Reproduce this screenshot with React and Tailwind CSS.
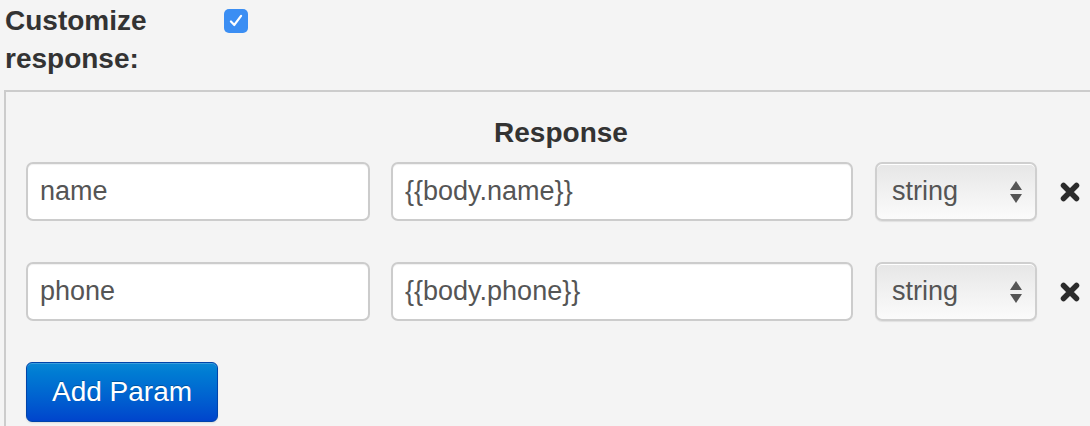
import { useState } from "react";

const font = { fontFamily: '"Liberation Sans", Arial, sans-serif' };

const RemoveIcon = () => (
  <svg width="22" height="22" viewBox="0 0 22 22" className="shrink-0">
    <path
      d="M4.5 4.5 L17.5 17.5 M17.5 4.5 L4.5 17.5"
      stroke="#2b2b2b"
      strokeWidth="5.5"
      strokeLinecap="round"
      fill="none"
    />
  </svg>
);

const SelectArrows = () => (
  <svg width="14" height="26" viewBox="0 0 14 26">
    <path d="M7 2 L13 11 L1 11 Z" fill="#555" />
    <path d="M1 15 L13 15 L7 24 Z" fill="#555" />
  </svg>
);

const ParamRow = ({ param, onRemove }) => (
  <div className="flex items-center h-[59px]">
    <input
      type="text"
      defaultValue={param.name}
      className="w-[344px] h-full bg-white border-2 border-[#cccccc] rounded-[7px] px-3 text-[27px] text-[#555555] outline-none shadow-[inset_0_1px_1px_rgba(0,0,0,0.06)]"
      style={font}
    />
    <input
      type="text"
      defaultValue={param.value}
      className="ml-[21px] w-[462px] h-full bg-white border-2 border-[#cccccc] rounded-[7px] px-3 text-[27px] text-[#555555] outline-none shadow-[inset_0_1px_1px_rgba(0,0,0,0.06)]"
      style={font}
    />
    <div className="ml-[22px] w-[162px] h-full flex items-center justify-between border-2 border-[#cfcfcf] rounded-[7px] pl-[15px] pr-[12px] bg-gradient-to-b from-[#e6e6e6] via-[#f1f1f1] to-[#fbfbfb] shadow-[inset_0_1px_0_#ffffff,0_1px_1px_rgba(0,0,0,0.08)]">
      <span className="text-[27px] text-[#555555]">{param.type}</span>
      <SelectArrows />
    </div>
    <button onClick={onRemove} className="ml-[22px] cursor-pointer">
      <RemoveIcon />
    </button>
  </div>
);

const App = () => {
  const [custom, setCustom] = useState(true);
  const [params, setParams] = useState([
    { id: 1, name: "name", value: "{{body.name}}", type: "string" },
    { id: 2, name: "phone", value: "{{body.phone}}", type: "string" },
  ]);

  return (
    <div className="w-[1090px] h-[426px] overflow-hidden bg-[#f4f4f4] text-[#333333]" style={font}>
      {/* Customize toggle */}
      <div className="flex items-start pt-[2px] pl-[5px]">
        <div className="w-[219px] text-[28px] font-bold leading-[38px]">
          Customize
          <br />
          response:
        </div>
        <label className="mt-[7px] cursor-pointer">
          <input
            type="checkbox"
            checked={custom}
            onChange={() => setCustom(!custom)}
            className="sr-only"
          />
          <span
            className={`flex items-center justify-center w-[24px] h-[24px] rounded-[5px] ${
              custom ? "bg-[#3b8ef3]" : "bg-white border border-[#aaaaaa]"
            }`}
          >
            {custom && (
              <svg width="18" height="18" viewBox="0 0 16 16">
                <path d="M3.5 8.5 L6.5 11.5 L12.5 3.5" stroke="#ffffff" strokeWidth="2" fill="none" strokeLinecap="round" strokeLinejoin="round" />
              </svg>
            )}
          </span>
        </label>
      </div>

      {/* Response panel */}
      <div className="mt-[12px] ml-[4px] w-[1114px] border-2 border-[#cccccc] pt-[25px] px-[20px] pb-8">
        <div className="text-center text-[28px] font-bold leading-[32px]">Response</div>

        <div className="mt-[13px] flex flex-col gap-[41px]">
          {params.map((p) => (
            <ParamRow
              key={p.id}
              param={p}
              onRemove={() => setParams(params.filter((x) => x.id !== p.id))}
            />
          ))}
        </div>

        <button
          onClick={() =>
            setParams([...params, { id: Date.now(), name: "", value: "", type: "string" }])
          }
          className="mt-[41px] w-[192px] h-[60px] rounded-[6px] border border-[#0044aa] bg-gradient-to-b from-[#0a86d4] to-[#0044cc] text-white text-[28px] shadow-[inset_0_1px_0_rgba(255,255,255,0.2),0_1px_2px_rgba(0,0,0,0.1)] [text-shadow:0_-1px_0_rgba(0,0,0,0.25)]"
          style={font}
        >
          Add Param
        </button>
      </div>
    </div>
  );
};

export default App;
